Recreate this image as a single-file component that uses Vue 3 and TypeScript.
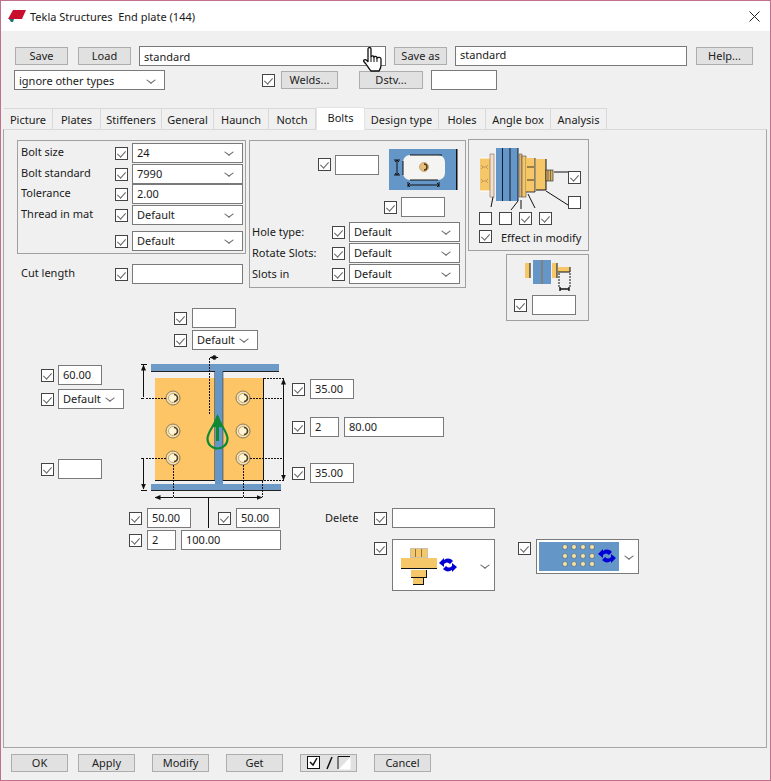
<script setup lang="ts">
const tabs = [
  { name: 'Picture', width: 49 },
  { name: 'Plates', width: 48 },
  { name: 'Stiffeners', width: 61 },
  { name: 'General', width: 52 },
  { name: 'Haunch', width: 55 },
  { name: 'Notch', width: 47 },
  { name: 'Bolts', width: 49 },
  { name: 'Design type', width: 74 },
  { name: 'Holes', width: 47 },
  { name: 'Angle box', width: 65 },
  { name: 'Analysis', width: 56 }
]

const bolts = [
  [173, 398], [173, 431], [173, 458],
  [243, 398], [243, 431], [243, 458]
]

const dots = [547, 556, 564].flatMap((y) => [565, 574, 583, 592].map((x) => [x - 539, y - 542]))

const flipArrows = 'M0 5 5 0v2c3-2 6-2 9 1l-3 3c-2-2-4-2-6 0v3zM18 9l-5 5v-2c-3 2-6 2-9-1l3-3c2 2 4 2 6 0V5z'
</script>

<template>
  <div class="window">
    <header class="titlebar">
      <svg class="app-icon" viewBox="0 0 18 14" width="18" height="14">
        <path d="M5 1h13l-4 9H0z" fill="#c8102e" />
        <path d="M1 10h5l-1 3H3z" fill="#1f6f7a" />
      </svg>
      <span class="title-text">Tekla Structures&nbsp; End plate (144)</span>
      <svg class="close" viewBox="0 0 11 11" width="11" height="11">
        <path d="M.5.5l10 10M10.5.5l-10 10" stroke="#222" fill="none" />
      </svg>
    </header>

    <div class="toolbar">
      <div class="tool-row">
        <button class="btn w53">Save</button>
        <button class="btn w53 ml10">Load</button>
        <span class="fld w247 ml8 low">standard</span>
        <button class="btn w53 ml8">Save as</button>
        <span class="fld w232 ml8 raised">standard</span>
        <button class="btn w57 ml9">Help...</button>
      </div>
      <div class="tool-row second">
        <span class="fld sel w151 low">ignore other types</span>
        <span class="cb on welds-check"></span>
        <button class="btn w57 ml6">Welds...</button>
        <button class="btn w64 ml21">Dstv...</button>
        <span class="fld w66 ml8"></span>
      </div>
    </div>

    <nav class="tabs">
      <div
        v-for="tab in tabs"
        :key="tab.name"
        class="tab"
        :class="{ active: tab.name === 'Bolts' }"
        :style="{ width: tab.width + 'px' }"
      >
        {{ tab.name }}
      </div>
    </nav>

    <main class="panel">
      <div class="upper">
        <div class="upper-left">
          <div class="groups">
            <div class="col-bolt">
              <section class="group bolt-group">
                <div class="row"><label>Bolt size</label><span class="cb on"></span><span class="fld sel w111">24</span></div>
                <div class="row"><label>Bolt standard</label><span class="cb on"></span><span class="fld sel w111">7990</span></div>
                <div class="row tight"><label>Tolerance</label><span class="cb on"></span><span class="fld w111">2.00</span></div>
                <div class="row"><label>Thread in mat</label><span class="cb on"></span><span class="fld sel w111">Default</span></div>
                <div class="row last"><label></label><span class="cb on"></span><span class="fld sel w111">Default</span></div>
              </section>
              <div class="row cut-row"><label>Cut length</label><span class="cb on"></span><span class="fld w111"></span></div>
            </div>

            <section class="group hole-group">
              <div class="slot-row">
                <span class="cb on"></span>
                <span class="fld w44 ml4"></span>
                <svg class="slot-pic" viewBox="0 0 69 41" width="69" height="41">
                  <rect width="68" height="41" fill="#6596c8" />
                  <rect x="67" width="1.5" height="41" fill="#111" />
                  <rect x="14" y="6" width="42" height="25" rx="7" fill="#f4f4f2" />
                  <path d="M21 6h32M14 12v14M21 31h28" stroke="#111" fill="none" />
                  <circle cx="35" cy="18" r="4.5" fill="#e6bd7c" stroke="#c9a870" />
                  <path d="M35 15a3 3 0 0 1 0 6" fill="none" stroke="#4a3a1c" stroke-width="1.4" />
                  <path d="M8 11v15M5 11h6M5 26h6M6 13l2-2 2 2M6 24l2 2 2-2" stroke="#111" fill="none" />
                  <path d="M19 36h31M19 33v5M50 33v5M21 34l-2 2 2 2M48 34l2 2-2 2" stroke="#111" fill="none" />
                </svg>
              </div>
              <div class="slot-row-2"><span class="cb on"></span><span class="fld w44 ml4"></span></div>
              <div class="row hole-row first"><label>Hole type:</label><span class="cb on"></span><span class="fld sel w111">Default</span></div>
              <div class="row hole-row"><label>Rotate Slots:</label><span class="cb on"></span><span class="fld sel w111">Default</span></div>
              <div class="row hole-row"><label>Slots in</label><span class="cb on"></span><span class="fld sel w111">Default</span></div>
            </section>
          </div>

          <div class="top-fields">
            <div class="line"><span class="cb on"></span><span class="fld w44 ml5"></span></div>
            <div class="line"><span class="cb on"></span><span class="fld sel w66 ml5">Default</span></div>
          </div>
        </div>

        <div class="upper-right">
          <section class="group effect-group">
            <div class="effect-top">
              <svg viewBox="0 0 90 70" width="90" height="70">
                <rect x="2" y="16" width="10" height="33" fill="#f6c768" />
                <path d="M2 16h10M2 49h10" stroke="#fff" />
                <path d="M3 23l2 2 3 0 2-2M3 27l2-2M8 25l2 2M3 37l2 2 3 0 2-2M3 41l2-2M8 39l2 2" stroke="#a98a50" stroke-width=".7" fill="none" />
                <rect x="12" y="12" width="4" height="43" fill="#f7dcc6" stroke="#555" stroke-width=".5" />
                <rect x="18" y="6" width="22" height="53" fill="#6596c8" />
                <path d="M24.5 6v53M32 6v53M40 6v53" stroke="#0d1c33" />
                <rect x="41" y="12" width="3" height="43" fill="#d8b27a" stroke="#444" stroke-width=".5" />
                <rect x="44" y="14" width="4" height="41" fill="#f6c768" stroke="#333" stroke-width=".5" />
                <rect x="48" y="16" width="9" height="34" fill="#f6c768" />
                <path d="M48 50h9M57 16v34M49 25h7M49 38h7" stroke="#111" stroke-width=".8" />
                <rect x="58" y="17" width="10" height="31" fill="#f6c768" />
                <path d="M58 48h10M68 17v31" stroke="#111" />
                <rect x="68" y="28" width="7" height="11" fill="#d9b36a" stroke="#222" stroke-width=".6" />
                <path d="M70 28v11M72.500 28v11" stroke="#222" stroke-width=".5" />
                <path d="M76 30h14M68 49l22 14M15 55l-2 10M40 59l-7 9M43 58v9M50 52l7 14" stroke="#111" fill="none" />
              </svg>
              <div class="effect-side">
                <span class="cb on"></span>
                <span class="cb"></span>
              </div>
            </div>
            <div class="effect-checks">
              <span class="cb"></span><span class="cb"></span><span class="cb on"></span><span class="cb on"></span>
            </div>
            <div class="effect-label"><span class="cb on"></span><span>Effect in modify</span></div>
          </section>

          <section class="group shank-group">
            <svg class="shank-pic" viewBox="0 0 46 34" width="46" height="34">
              <rect x="0" y="5" width="5" height="15" fill="#f6c768" />
              <path d="M5 5v15" stroke="#111" />
              <rect x="8" y="2" width="8" height="24" fill="#6596c8" />
              <rect x="18" y="2" width="8" height="24" fill="#6596c8" />
              <path d="M17 2v24" stroke="#111" />
              <rect x="27" y="5" width="5" height="15" fill="#f6c768" />
              <path d="M32 5v15" stroke="#111" />
              <rect x="33" y="9" width="12" height="5" fill="#f6c768" />
              <path d="M33 14h12M45 9v5" stroke="#111" />
              <path d="M34 15v15M45 15v15" stroke="#111" stroke-dasharray="2 1" />
              <path d="M35 31h9M35 29v4M44 29v4" stroke="#111" stroke-width="1.4" />
            </svg>
            <div class="line"><span class="cb on"></span><span class="fld w44 ml5"></span></div>
          </section>
        </div>
      </div>

      <div class="diagram-row">
        <div class="side-left">
          <div class="line"><span class="cb on"></span><span class="fld w44 ml4">60.00</span></div>
          <div class="line gap4"><span class="cb on"></span><span class="fld sel w66 ml4">Default</span></div>
          <div class="line gap50"><span class="cb on"></span><span class="fld w44 ml4"></span></div>
        </div>

        <svg class="diagram" viewBox="140 355 146 153" width="146" height="153">
          <defs>
            <marker id="tip" viewBox="0 0 6 6" refX="5.5" refY="3" markerWidth="6" markerHeight="6" orient="auto-start-reverse">
              <path d="M0 .5 6 3 0 5.500z" fill="#111" />
            </marker>
          </defs>
          <rect x="155" y="378" width="108" height="102" fill="#fdc566" />
          <path d="M263.500 378v102.500M155 480.500h60M222 480.500h41" stroke="#111" fill="none" />
          <rect x="151" y="364" width="128" height="7" fill="#6e9ac8" />
          <path d="M151 371.500h64M222 371.500h57" stroke="#222" />
          <rect x="215" y="371" width="8" height="113" fill="#6596c8" />
          <path d="M214.500 371v110M223 371v110" stroke="#222" stroke-width=".5" />
          <rect x="151" y="484" width="130" height="6" fill="#6e9ac8" />
          <path d="M151 490.500h130" stroke="#222" />

          <g v-for="b in bolts" :key="b.join()">
            <circle :cx="b[0]" :cy="b[1]" r="7" fill="#f2e2bc" stroke="#8f7a4e" />
            <circle :cx="b[0]" :cy="b[1]" r="4.500" fill="#fff4d4" stroke="#c4a870" />
            <path :d="`M${b[0] + 1} ${b[1] - 3.5}a3.500 3.500 0 0 1 0 7`" fill="none" stroke="#4f3f1e" stroke-width="1.600" />
          </g>

          <path d="M217.500 416c2 9 10 15 10 23a10 9.500 0 0 1-20 0c0-8 8-14 10-23z" fill="none" stroke="#0f8a34" stroke-width="2.200" />
          <path d="M217.500 414l5 13h-3.500v14h-3v-14h-3.500z" fill="#0f8a34" />

          <g stroke="#111" fill="none">
            <path d="M143.500 365v32M143.500 459v30" marker-start="url(#tip)" marker-end="url(#tip)" />
            <path d="M141 364.500h6M141 490.500h6M141 458.500h3M141 398.500h3" />
            <path d="M146 398.500h20M146 458.500h20M209.500 358v56" stroke-dasharray="2 1" />
            <path d="M210 357.500h8" marker-start="url(#tip)" marker-end="url(#tip)" />
            <path d="M264 378.500h20M250 398.500h34M250 458.500h34M264 480.500h20" stroke-dasharray="2 1" />
            <path d="M283.500 379v19M283.500 398v33M283.500 431v27M283.500 458v22" marker-start="url(#tip)" marker-end="url(#tip)" />
            <path d="M173.500 465v32M243.500 465v32M262.500 481v16" stroke-dasharray="2 1" />
            <path d="M155 497.500h18M174 497.500h69M244 497.500h18" marker-start="url(#tip)" marker-end="url(#tip)" />
            <path d="M208.500 498v10" />
          </g>
        </svg>

        <div class="side-right">
          <div class="line"><span class="cb on"></span><span class="fld w44 ml5">35.00</span></div>
          <div class="line gap18"><span class="cb on"></span><span class="fld w29 ml5">2</span><span class="fld w100 ml5">80.00</span></div>
          <div class="line gap26"><span class="cb on"></span><span class="fld w44 ml5">35.00</span></div>
        </div>
      </div>

      <div class="bottom-row">
        <div class="bottom-left">
          <div class="line">
            <span class="cb on"></span><span class="fld w44 ml5">50.00</span>
            <span class="stem"></span>
            <span class="cb on"></span><span class="fld w44 ml5">50.00</span>
          </div>
          <div class="line gap2">
            <span class="cb on"></span><span class="fld w29 ml5">2</span><span class="fld w100 ml5">100.00</span>
          </div>
        </div>

        <div class="bottom-mid">
          <div class="line"><label class="delete">Delete</label><span class="cb on"></span><span class="fld w103 ml5"></span></div>
          <div class="line pic-line">
            <span class="cb on"></span>
            <span class="fld sel pic-sel w103 ml5 tall">
              <svg viewBox="0 0 60 42" width="60" height="42">
                <rect x="10.500" y="4.500" width="17" height="9" fill="#f6c768" stroke="#c9c2b0" />
                <path d="M15.500 5v8M21.500 5v8" stroke="#8a7448" />
                <rect x="1" y="14" width="36" height="10" fill="#f6c768" />
                <path d="M1 24.500h36" stroke="#111" />
                <rect x="11" y="26" width="15" height="8" fill="#f6c768" />
                <path d="M11 33.500h15M26.500 26v8" stroke="#111" />
                <rect x="13" y="34" width="10" height="7" fill="#f6c768" />
                <path d="M13 40.500h10M23.500 34v7" stroke="#111" />
                <path :d="flipArrows" fill="#0000d6" transform="translate(39 14)" />
              </svg>
            </span>
          </div>
        </div>

        <div class="bottom-right">
          <span class="cb on"></span>
          <span class="fld sel pic-sel w103 ml5 medium">
            <svg viewBox="0 0 80 29" width="80" height="29">
              <rect width="80" height="29" fill="#6596c8" />
              <circle v-for="d in dots" :key="d.join()" :cx="d[0]" :cy="d[1]" r="2.400" fill="#f6e4a8" stroke="#26384f" stroke-width=".4" />
              <path :d="flipArrows" fill="#0000d6" transform="translate(59 7)" />
            </svg>
          </span>
        </div>
      </div>
    </main>

    <footer class="footer">
      <button class="btn w57">OK</button>
      <button class="btn w57 ml10">Apply</button>
      <button class="btn w57 ml17">Modify</button>
      <button class="btn w57 ml17">Get</button>
      <button class="btn w57 ml17 toggle">
        <svg viewBox="0 0 44 14" width="44" height="14">
          <rect x=".5" y=".5" width="12" height="12" fill="#fff" stroke="#111" />
          <path d="M3 6l3 3 4-7" fill="none" stroke="#111" stroke-width="1.500" />
          <path d="M20 13l5-12" stroke="#111" stroke-width="1.500" />
          <path d="M32 13h11V1.500" fill="#fff" stroke="#fff" />
          <path d="M31 13V.5h12" fill="none" stroke="#111" />
        </svg>
      </button>
      <button class="btn w57 ml17">Cancel</button>
    </footer>

    <svg class="cursor" viewBox="0 0 20 26" width="20" height="26">
      <path d="M5 2c0-2 3-2 3 0v8c1-2 3-1 3 0 1-1 3-1 3 1 1-1 4-1 4 1v6c0 3-1 4-2 6H8c-2-2-3-4-5-7-2-2-3-3-2-4s3 0 4 2z" fill="#fff" stroke="#111" stroke-width="1.300" />
      <path d="M8 10v5M11 10v5M14 11v4" stroke="#111" fill="none" />
    </svg>
  </div>
</template>

<style>
html,
body {
  margin: 0;
  background: #f0f0f0;
}
</style>

<style scoped>
.window {
  position: relative;
  box-sizing: border-box;
  width: 771px;
  height: 781px;
  display: flex;
  flex-direction: column;
  border: 1px solid #c0708a;
  background: #f0f0f0;
  font-family: "Noto Sans", "Open Sans", sans-serif;
  font-size: 11px;
  color: #1a1a1a;
  overflow: hidden;
}

.titlebar {
  display: flex;
  align-items: center;
  height: 30px;
  flex: none;
  background: #fff;
  padding: 0 10px 0 7px;
}

.app-icon {
  margin-right: 4px;
}

.title-text {
  font-size: 11px;
}

.close {
  margin-left: auto;
}

.toolbar {
  flex: none;
  padding: 15px 0 0 14px;
}

.tool-row {
  display: flex;
  align-items: center;
  height: 20px;
}

.tool-row.second {
  margin-top: 4px;
  margin-left: -1px;
  height: 20px;
}

.welds-check {
  margin-left: 97px;
}

.btn {
  box-sizing: border-box;
  height: 18px;
  padding: 0 0 1px;
  border: 1px solid #adadad;
  background: #e1e1e1;
  font: inherit;
  color: #222;
  line-height: 15px;
}

.fld {
  box-sizing: border-box;
  display: flex;
  align-items: center;
  flex: none;
  height: 20px;
  border: 1px solid #7a7a7a;
  background: #fff;
  padding: 0 4px 2px;
  white-space: nowrap;
  overflow: hidden;
}

.fld.low {
  padding-bottom: 0;
}

.fld.raised {
  padding-bottom: 3px;
}

.sel::after {
  content: "";
  width: 5px;
  height: 5px;
  margin: -1px 6px 0 auto;
  border-right: 1px solid #666;
  border-bottom: 1px solid #666;
  transform: rotate(45deg) skew(-8deg, -8deg);
  flex: none;
}

.w29 { width: 29px; }
.w44 { width: 44px; }
.w53 { width: 53px; }
.w57 { width: 57px; }
.w64 { width: 64px; }
.w66 { width: 66px; }
.w100 { width: 100px; }
.w103 { width: 103px; }
.w111 { width: 111px; }
.w151 { width: 151px; }
.w232 { width: 232px; }
.w247 { width: 247px; }

.ml4 { margin-left: 4px; }
.ml5 { margin-left: 5px; }
.ml6 { margin-left: 6px; }
.ml8 { margin-left: 8px; }
.ml9 { margin-left: 9px; }
.ml10 { margin-left: 10px; }
.ml17 { margin-left: 17px; }
.ml21 { margin-left: 21px; }

.cb {
  box-sizing: border-box;
  position: relative;
  display: block;
  flex: none;
  width: 13px;
  height: 13px;
  border: 1px solid #444;
  background: #fff;
}

.cb.on::after {
  content: "";
  position: absolute;
  left: 3px;
  top: 1px;
  width: 4px;
  height: 7px;
  border-right: 1px solid #666;
  border-bottom: 1px solid #666;
  transform: rotate(42deg);
}

.tabs {
  display: flex;
  flex: none;
  height: 21px;
  margin: 18px 0 0 3px;
  position: relative;
  z-index: 1;
}

.tab {
  box-sizing: border-box;
  height: 21px;
  border-top: 1px solid #d9d9d9;
  border-right: 1px solid #d9d9d9;
  text-align: center;
  line-height: 21px;
  white-space: nowrap;
}

.tab.active {
  height: 23px;
  margin-top: -1px;
  background: #fff;
  border: 1px solid #e4e4e4;
  border-bottom: 0;
  line-height: 20px;
}

.panel {
  box-sizing: border-box;
  flex: 1;
  margin: 0 3px 0 2px;
  padding: 10px 0 0 13px;
  border: 1px solid #a6a6a6;
  border-top-color: #d9d9d9;
}

.upper {
  display: flex;
}

.groups {
  display: flex;
}

.group {
  box-sizing: border-box;
  border: 1px solid #a0a0a0;
}

.row {
  display: flex;
  align-items: center;
  height: 20px;
  margin-top: 1px;
}

.row label {
  flex: none;
}

.bolt-group {
  width: 229px;
  height: 114px;
  padding: 2px 0 0 3px;
}

.bolt-group .row label,
.cut-row label {
  width: 94px;
  margin-top: -3px;
}

.bolt-group .row .cb,
.cut-row .cb {
  margin-right: 4px;
}

.bolt-group .row:first-child,
.bolt-group .row.tight {
  margin-top: 0;
}

.bolt-group .row.last {
  margin-top: 6px;
}

.cut-row {
  margin: 10px 0 0 4px;
}

.hole-group {
  width: 217px;
  height: 148px;
  margin-left: 3px;
  padding-left: 2px;
}

.slot-row {
  display: flex;
  align-items: flex-start;
  margin-top: 8px;
  padding-left: 66px;
}

.slot-row > .cb {
  margin-top: 9px;
}

.slot-row > .fld {
  margin-top: 6px;
}

.slot-pic {
  margin-left: 10px;
}

.slot-row-2 {
  display: flex;
  align-items: center;
  margin-top: 7px;
  padding-left: 132px;
}

.hole-row label {
  width: 80px;
  margin-top: -2px;
}

.hole-row .cb {
  margin-right: 4px;
}

.hole-row.first {
  margin-top: 5px;
}

.top-fields {
  margin: 20px 0 0 157px;
}

.line {
  display: flex;
  align-items: center;
}

.top-fields .line + .line {
  margin-top: 2px;
}

.upper-right {
  display: flex;
  flex-direction: column;
  align-items: flex-end;
  margin-left: 2px;
}

.effect-group {
  width: 121px;
  height: 112px;
  margin-top: -1px;
  padding: 2px 0 0 9px;
}

.effect-top {
  display: flex;
}

.effect-side {
  display: flex;
  flex-direction: column;
  gap: 12px;
  margin-top: 29px;
}

.effect-checks {
  display: flex;
  gap: 7px;
  margin-left: 1px;
}

.effect-label {
  display: flex;
  align-items: center;
  margin: 3px 0 0 1px;
}

.effect-label span:last-child {
  margin: 2px 0 0 9px;
  white-space: nowrap;
}

.shank-group {
  width: 83px;
  height: 67px;
  margin-top: 3px;
  padding: 3px 0 0 7px;
}

.shank-pic {
  display: block;
  margin-left: 11px;
}

.shank-group .line {
  margin-top: 3px;
}

.diagram-row {
  display: flex;
  margin-top: 5px;
}

.side-left {
  flex: none;
  width: 99px;
  margin-left: 24px;
  padding-top: 10px;
}

.diagram {
  flex: none;
  overflow: visible;
}

.side-right {
  margin-left: 6px;
  padding-top: 24px;
}

.gap2 { margin-top: 2px; }
.gap4 { margin-top: 4px; }
.gap18 { margin-top: 18px; }
.gap26 { margin-top: 26px; }
.gap50 { margin-top: 50px; }

.bottom-row {
  display: flex;
  align-items: flex-start;
}

.bottom-left {
  flex: none;
  width: 196px;
  margin-left: 112px;
}

.stem {
  flex: none;
  width: 1px;
  height: 20px;
  margin: 0 9px 0 17px;
  background: #111;
}

.bottom-mid {
  flex: none;
  width: 170px;
}

.delete {
  width: 49px;
  margin-top: -2px;
}

.pic-line {
  align-items: flex-start;
  margin-top: 11px;
  margin-left: 49px;
}

.pic-line > .cb {
  margin-top: 3px;
}

.pic-sel {
  padding: 0 0 0 2px;
}

.tall {
  height: 52px;
  padding-left: 7px;
}

.medium {
  height: 35px;
}

.bottom-right {
  display: flex;
  align-items: flex-start;
  margin: 31px 0 0 23px;
}

.bottom-right > .cb {
  margin-top: 3px;
}

.footer {
  box-sizing: border-box;
  display: flex;
  flex: none;
  height: 32px;
  align-items: flex-start;
  padding: 6px 0 0 10px;
}

.toggle {
  display: flex;
  align-items: center;
  justify-content: center;
}

.cursor {
  position: absolute;
  left: 362px;
  top: 46px;
}
</style>
